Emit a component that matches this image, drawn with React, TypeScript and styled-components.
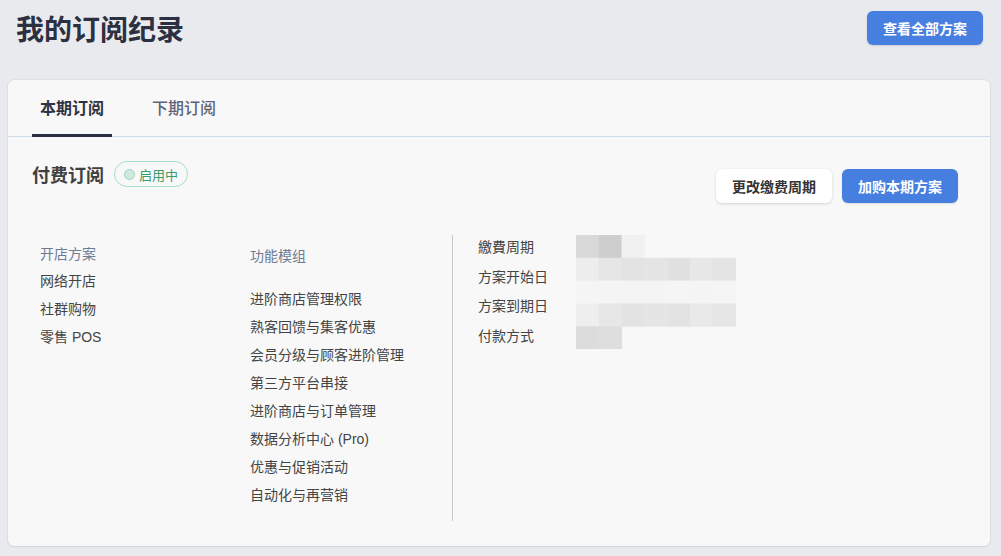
import styled, { createGlobalStyle } from "styled-components";
import { useState } from "react";

// Dados das colunas
const storePlans = ["网络开店", "社群购物", "零售 POS"];

const modules = [
  "进阶商店管理权限",
  "熟客回馈与集客优惠",
  "会员分级与顾客进阶管理",
  "第三方平台串接",
  "进阶商店与订单管理",
  "数据分析中心 (Pro)",
  "优惠与促销活动",
  "自动化与再营销",
];

const detailLabels = ["繳費周期", "方案开始日", "方案到期日", "付款方式"];

// Mosaico que esconde os dados sensíveis
const mosaic: string[][] = [
  ["#d9d9d9", "#cecece", "#f1f1f1"],
  ["#ededed", "#e6e6e6", "#e3e3e3", "#e5e5e5", "#e1e1e1", "#e7e7e7", "#e4e4e4"],
  ["#f5f5f5", "#f4f4f4", "#f4f4f4", "#f4f4f4", "#f5f5f5", "#f4f4f4", "#f5f5f5"],
  ["#eeeeee", "#e7e7e7", "#e3e3e3", "#e5e5e5", "#e3e3e3", "#e9e9e9", "#e6e6e6"],
  ["#dcdcdc", "#dedede"],
];

const CELL = 22.8;

export default function App() {
  const [tab, setTab] = useState(0);

  return (
    <>
      <GlobalStyle />
      <Page>
        <PageHeader>
          <PageTitle>我的订阅纪录</PageTitle>
          <PrimaryButton>查看全部方案</PrimaryButton>
        </PageHeader>

        <Card>
          <Tabs>
            {["本期订阅", "下期订阅"].map((label, i) => (
              <Tab key={label} $active={tab === i} onClick={() => setTab(i)}>
                {label}
              </Tab>
            ))}
          </Tabs>

          <Section>
            <SectionHeader>
              <TitleGroup>
                <SectionTitle>付费订阅</SectionTitle>
                <Badge>
                  <BadgeDot />
                  启用中
                </Badge>
              </TitleGroup>
              <Actions>
                <SecondaryButton>更改缴费周期</SecondaryButton>
                <PrimaryButton>加购本期方案</PrimaryButton>
              </Actions>
            </SectionHeader>

            <Columns>
              <PlanColumn>
                <ColumnTitle>开店方案</ColumnTitle>
                {storePlans.map((p) => (
                  <Item key={p}>{p}</Item>
                ))}
              </PlanColumn>

              <ModuleColumn>
                <ModuleTitle>功能模组</ModuleTitle>
                {modules.map((m) => (
                  <Item key={m}>{m}</Item>
                ))}
              </ModuleColumn>

              <DetailColumn>
                <Labels>
                  {detailLabels.map((l) => (
                    <DetailLabel key={l}>{l}</DetailLabel>
                  ))}
                </Labels>
                <Mosaic width={CELL * 7} height={CELL * 5}>
                  {mosaic.map((row, r) =>
                    row.map((c, i) => (
                      <rect
                        key={`${r}-${i}`}
                        x={i * CELL}
                        y={r * CELL}
                        width={CELL + 0.5}
                        height={CELL + 0.5}
                        fill={c}
                      />
                    ))
                  )}
                </Mosaic>
              </DetailColumn>
            </Columns>
          </Section>
        </Card>
      </Page>
    </>
  );
}

const GlobalStyle = createGlobalStyle`
  html, body {
    margin: 0;
    padding: 0;
    background: #e9eaee;
  }
  body {
    font-family: "Liberation Sans", "Noto Sans CJK SC", sans-serif;
    color: #444;
  }
`;

const Page = styled.div`
  width: 1001px;
  min-height: 556px;
  padding: 11px 11px 10px 8px;
  box-sizing: border-box;
`;

const PageHeader = styled.div`
  display: flex;
  align-items: center;
  justify-content: space-between;
  padding: 0 7px 0 8px;
  height: 34px;
`;

const PageTitle = styled.h1`
  margin: 0;
  font-size: 28px;
  font-weight: 700;
  color: #2c3040;
  font-family: "Noto Sans CJK SC", sans-serif;
`;

const PrimaryButton = styled.button`
  height: 34px;
  width: 116px;
  border: none;
  border-radius: 6px;
  background: #477fe0;
  color: #fff;
  font-family: "Noto Sans CJK SC", sans-serif;
  font-size: 14px;
  font-weight: 700;
  cursor: pointer;
  box-shadow: 0 1px 2px rgba(0, 0, 0, 0.12);
`;

const SecondaryButton = styled(PrimaryButton)`
  background: #fff;
  color: #333;
  box-shadow: 0 1px 3px rgba(0, 0, 0, 0.15);
`;

const Card = styled.div`
  margin-top: 35px;
  background: #f8f8f8;
  border-radius: 6px;
  box-shadow: 0 0 0 1px rgba(0, 0, 0, 0.04), 0 1px 2px rgba(0, 0, 0, 0.06);
  padding-bottom: 25px;
`;

const Tabs = styled.div`
  display: flex;
  gap: 32px;
  padding: 0 24px;
  height: 56px;
  border-bottom: 1px solid #cfdbe9;
`;

const Tab = styled.div<{ $active: boolean }>`
  display: flex;
  align-items: center;
  padding: 0 8px;
  font-family: "Noto Sans CJK SC", sans-serif;
  font-size: 16px;
  font-weight: ${(p) => (p.$active ? 700 : 500)};
  color: ${(p) => (p.$active ? "#2f3242" : "#5b6479")};
  border-bottom: 3px solid ${(p) => (p.$active ? "#2b3040" : "transparent")};
  margin-bottom: -1px;
  cursor: pointer;
`;

const Section = styled.div`
  padding: 24px 32px 0 24px;
`;

const SectionHeader = styled.div`
  display: flex;
  justify-content: space-between;
  align-items: flex-start;
`;

const TitleGroup = styled.div`
  display: flex;
  align-items: center;
  gap: 10px;
`;

const SectionTitle = styled.h2`
  margin: 0;
  font-family: "Noto Sans CJK SC", sans-serif;
  font-size: 18px;
  font-weight: 700;
  color: #404040;
  line-height: 26px;
`;

const Badge = styled.span`
  display: inline-flex;
  align-items: center;
  gap: 4px;
  height: 24px;
  padding: 0 9px;
  border: 1px solid #a6dfc8;
  border-radius: 13px;
  color: #3a9b6c;
  font-family: "Noto Sans CJK SC", sans-serif;
  font-size: 13px;
`;

const BadgeDot = styled.span`
  width: 9px;
  height: 9px;
  border-radius: 50%;
  background: #cfe9df;
  border: 1px solid #9fd4bd;
`;

const Actions = styled.div`
  display: flex;
  gap: 10px;
  margin-top: 8px;
`;

const Columns = styled.div`
  display: flex;
  margin-top: 32px;
  padding-left: 8px;
`;

const PlanColumn = styled.div`
  width: 210px;
  padding-top: 4px;
`;

const ModuleColumn = styled.div`
  width: 202px;
  padding-top: 6px;
  border-right: 1px solid #c8c8c8;
  padding-bottom: 12px;
`;

const ColumnTitle = styled.div`
  font-family: "Noto Sans CJK SC", sans-serif;
  font-size: 14px;
  line-height: 28px;
  color: #6e7b94;
`;

const ModuleTitle = styled(ColumnTitle)`
  margin-bottom: 16px;
`;

const Item = styled.div`
  font-size: 14px;
  line-height: 28px;
  color: #444;
`;

const DetailColumn = styled.div`
  display: flex;
  align-items: flex-start;
  padding-left: 25px;
`;

const Labels = styled.div`
  width: 98px;
  margin-top: -2px;
`;

const DetailLabel = styled.div`
  font-size: 14px;
  line-height: 29.7px;
  color: #444;
`;

const Mosaic = styled.svg`
  display: block;
`;
